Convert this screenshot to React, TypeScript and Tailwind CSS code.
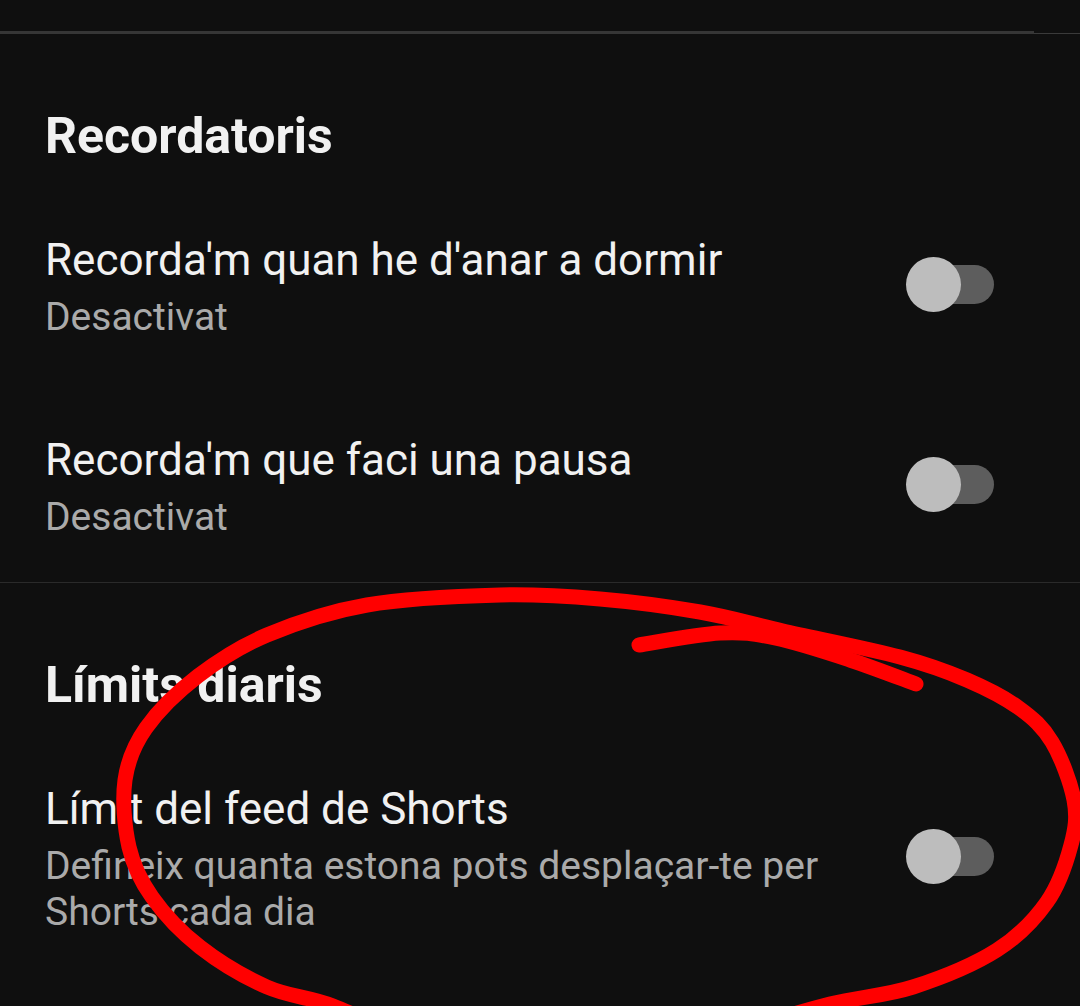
import React from "react";

type P = [number, number];

function smooth(pts: P[]): string {
  let d = `M ${pts[0][0]} ${pts[0][1]}`;
  for (let i = 0; i < pts.length - 1; i++) {
    const p0 = pts[i - 1] || pts[i];
    const p1 = pts[i];
    const p2 = pts[i + 1];
    const p3 = pts[i + 2] || p2;
    const c1x = p1[0] + (p2[0] - p0[0]) / 6;
    const c1y = p1[1] + (p2[1] - p0[1]) / 6;
    const c2x = p2[0] - (p3[0] - p1[0]) / 6;
    const c2y = p2[1] - (p3[1] - p1[1]) / 6;
    d += ` C ${c1x.toFixed(1)} ${c1y.toFixed(1)}, ${c2x.toFixed(1)} ${c2y.toFixed(1)}, ${p2[0]} ${p2[1]}`;
  }
  return d;
}

const loop: P[] = [
  [420, 1045],
  [333, 1006],
  [267, 987],
  [200, 947],
  [152, 897],
  [129, 847],
  [125, 780],
  [146, 728],
  [198, 676],
  [267, 635],
  [367, 605],
  [500, 595],
  [600, 599],
  [700, 612],
  [783, 631],
  [900, 657],
  [967, 680],
  [1019, 708],
  [1052, 742],
  [1074, 800],
  [1071, 845],
  [1047, 902],
  [997, 950],
  [913, 987],
  [830, 1004],
  [740, 1030],
];

const tail: P[] = [
  [639, 645],
  [720, 633],
  [775, 638],
  [850, 660],
  [916, 684],
];

function Toggle() {
  return (
    <div className="relative w-[88px] h-[56px] shrink-0 mb-[4px]">
      <div className="absolute right-0 top-[8px] w-[80px] h-[39px] rounded-full bg-[#5d5d5d]" />
      <div className="absolute left-0 top-0 w-[55px] h-[55px] rounded-full bg-[#bdbdbd]" />
    </div>
  );
}

function Item({ title, sub, className }: { title: string; sub: string; className?: string }) {
  return (
    <div className={`flex items-center justify-between pl-[45px] pr-[86px] ${className ?? ""}`}>
      <div className="w-[800px]">
        <div className="text-[44px] leading-[55px] text-[#f1f1f1]">{title}</div>
        <div className="mt-[6px] text-[39px] leading-[46px] text-[#aaaaaa]">{sub}</div>
      </div>
      <Toggle />
    </div>
  );
}

export default function App() {
  return (
    <div
      className="relative w-[1080px] h-[1006px] overflow-hidden bg-[#0f0f0f]"
      style={{ fontFamily: "Roboto, 'Noto Sans', sans-serif" }}
    >
      <div className="pt-[31px] flex items-end">
        <div className="h-[3px] w-[1034px] bg-[#363636]" />
        <div className="h-[1px] flex-1 bg-[#3a3a3a]" />
      </div>

      <div className="mt-[77px] pl-[45px] text-[50px] leading-[50px] font-bold text-[#f1f1f1]">
        Recordatoris
      </div>

      <Item className="mt-[72px]" title="Recorda'm quan he d'anar a dormir" sub="Desactivat" />
      <Item className="mt-[93px]" title="Recorda'm que faci una pausa" sub="Desactivat" />

      <div className="mt-[42px] h-[1px] bg-[#2a2a2a]" />

      <div className="mt-[77px] pl-[45px] text-[50px] leading-[50px] font-bold text-[#f1f1f1]">
        Límits diaris
      </div>

      <Item
        className="mt-[72px]"
        title="Límit del feed de Shorts"
        sub="Defineix quanta estona pots desplaçar-te per Shorts cada dia"
      />

      <svg
        className="absolute inset-0 pointer-events-none"
        width="1080"
        height="1006"
        viewBox="0 0 1080 1006"
      >
        <path d={smooth(loop)} fill="none" stroke="#ff0000" strokeWidth="15" strokeLinecap="round" strokeLinejoin="round" />
        <path d={smooth(tail)} fill="none" stroke="#ff0000" strokeWidth="15" strokeLinecap="round" strokeLinejoin="round" />
      </svg>
    </div>
  );
}
